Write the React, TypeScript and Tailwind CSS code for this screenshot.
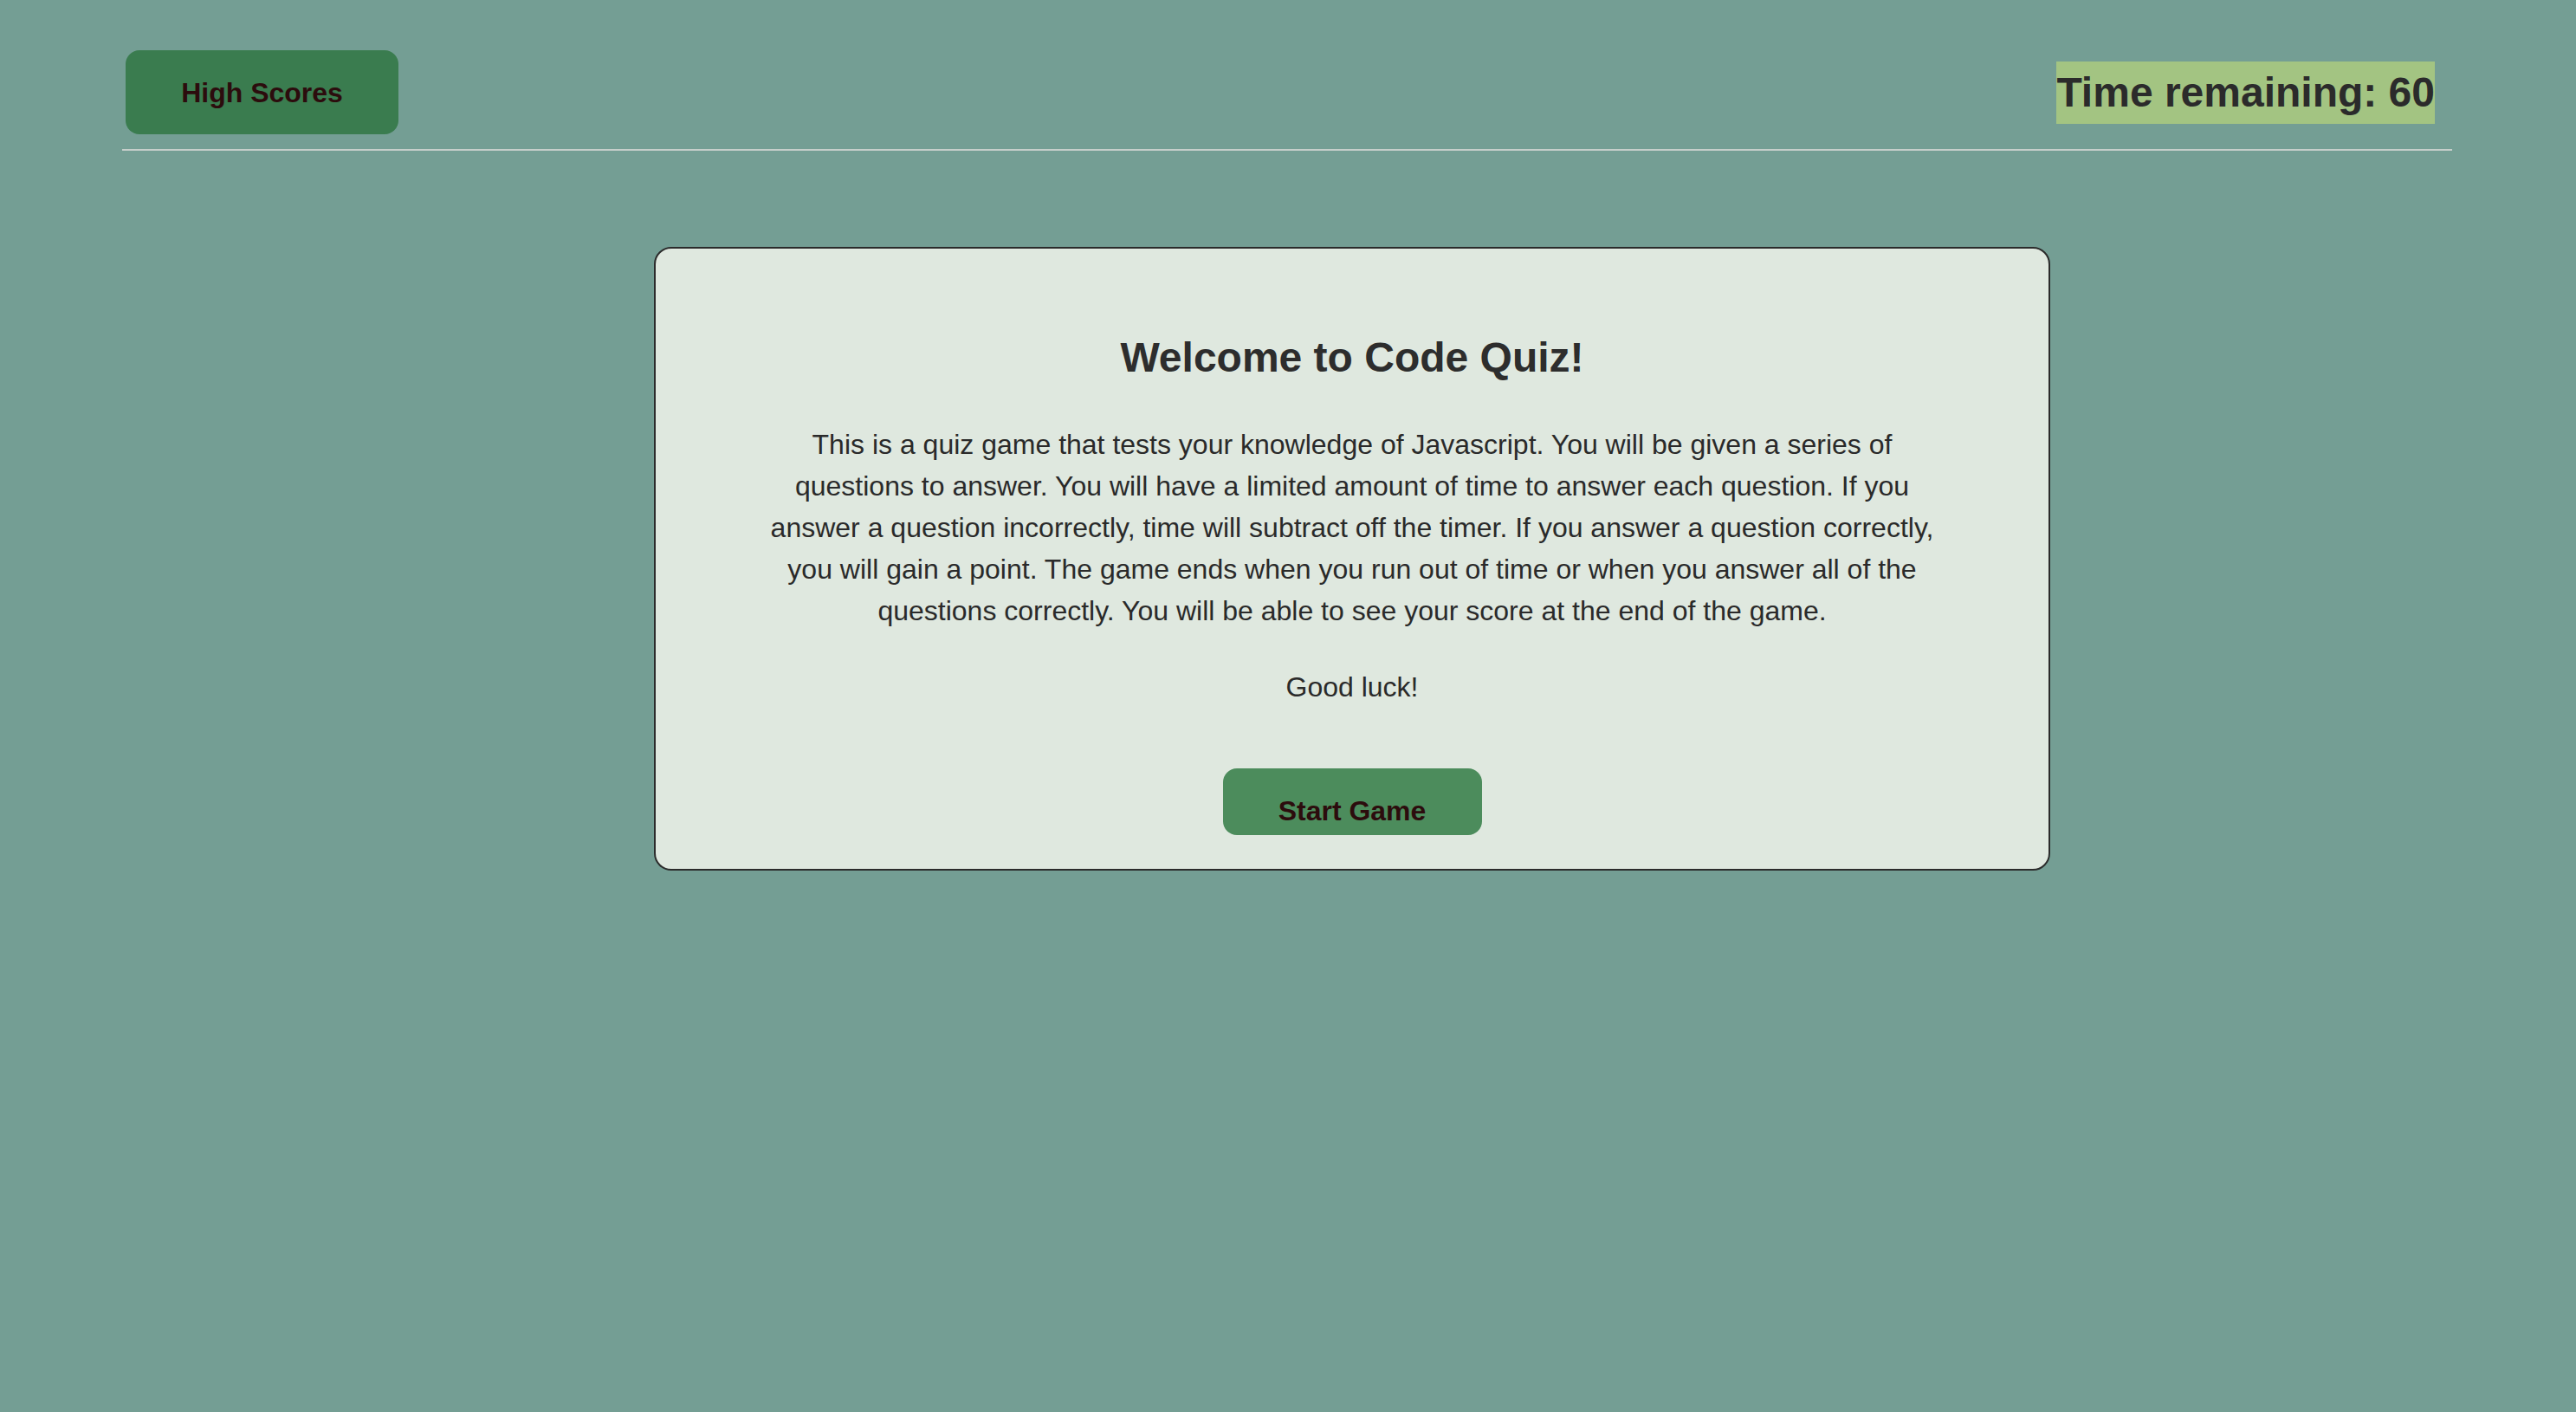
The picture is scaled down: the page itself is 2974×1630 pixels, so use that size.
const App = () => (
  <div className="min-h-screen w-full bg-[#749e94] font-['Liberation_Sans',Arial,sans-serif] text-[#2b2b2b]">
    <header className="ml-[141px] mr-[143px] flex items-center justify-between border-b-2 border-[#c6cfcb] pt-[58px] pb-[17px] pl-[4px] pr-[20px]">
      <button className="flex h-[97px] w-[315px] items-center justify-center rounded-[16px] bg-[#3a7c4f] text-[32px] font-bold text-[#2c0c0d]">
        High Scores
      </button>
      <h2 className="bg-[#a3c482] text-[48px] font-bold leading-[72px] text-[#2b2b2b]">Time remaining: 60</h2>
    </header>

    <main className="ml-[755px] mt-[111px] w-[1612px] rounded-[20px] border-2 border-[#2b2b2b] bg-[#dfe8df] pt-[98px] pb-[39px] text-center">
      <h1 className="text-[48px] font-bold leading-[56px] text-[#2d2d2d]">Welcome to Code Quiz!</h1>
      <p className="mx-auto mt-[48px] max-w-[1370px] text-[32px] leading-[48px] text-[#2a2a2a]">
        This is a quiz game that tests your knowledge of Javascript. You will be given a series of questions to answer.
        You will have a limited amount of time to answer each question. If you answer a question incorrectly, time will
        subtract off the timer. If you answer a question correctly, you will gain a point. The game ends when you run out
        of time or when you answer all of the questions correctly. You will be able to see your score at the end of the
        game.
      </p>
      <p className="mt-[40px] text-[32px] leading-[48px] text-[#2a2a2a]">Good luck!</p>
      <button className="mx-auto mt-[70px] block h-[77px] w-[299px] rounded-[16px] bg-[#4c8c5c] pt-[29px] pb-[8px] text-[32px] font-bold leading-[40px] text-[#2c0c0d]">
        Start Game
      </button>
    </main>
  </div>
);

export default App;
